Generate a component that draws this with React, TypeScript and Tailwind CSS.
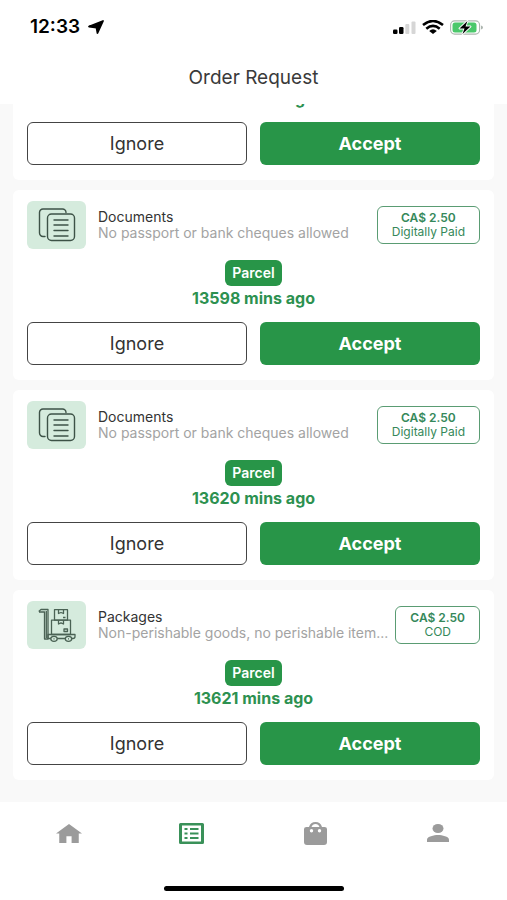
import React from "react";

type Order = {
  id: number;
  kind: "documents" | "packages";
  title: string;
  detail: string;
  price: string;
  payment: string;
  age: string;
};

const orders: Order[] = [
  { id: 2, kind: "documents", title: "Documents", detail: "No passport or bank cheques allowed", price: "CA$ 2.50", payment: "Digitally Paid", age: "13598 mins ago" },
  { id: 3, kind: "documents", title: "Documents", detail: "No passport or bank cheques allowed", price: "CA$ 2.50", payment: "Digitally Paid", age: "13620 mins ago" },
  { id: 4, kind: "packages", title: "Packages", detail: "Non-perishable goods, no perishable item...", price: "CA$ 2.50", payment: "COD", age: "13621 mins ago" },
];

function DocumentsIcon() {
  return (
    <svg viewBox="0 0 38 34" className="h-[34px] w-[38px]" fill="none" stroke="#3d5247" strokeWidth="1.4" strokeLinecap="round" aria-hidden="true">
      <path d="M7 28.500H5a3.500 3.500 0 0 1-3.500-3.500V4.500A3.500 3.500 0 0 1 5 1h19.500A3.500 3.500 0 0 1 28 4.500" />
      <rect x="9.500" y="6" width="27" height="26.500" rx="4" />
      <path d="M16 12h14M16 17h14M16 22.500h14M16 28h14" />
    </svg>
  );
}

function PackagesIcon() {
  return (
    <svg viewBox="0 0 38 34" className="h-[34px] w-[38px]" fill="none" stroke="#4a6254" strokeWidth="1.3" strokeLinejoin="round" aria-hidden="true">
      <path d="M0.700 3.500L3 1.500H10V31H6.500V4H1M8.300 3v27" />
      <path d="M10 26.500H37v2q0 2-2 2H10z" />
      <rect x="16.500" y="1.700" width="13" height="10.500" />
      <path d="M20.500 2v3.500l2.500-1 2.500 1V2M25 9.500H27.500" />
      <rect x="13.500" y="12.200" width="19" height="14.300" />
      <path d="M20.500 12v4l2.500-1.200L25.500 16v-4M26 21h3.500v2.500H26z" />
      <ellipse cx="16" cy="30.800" rx="3.200" ry="2.500" fill="#d5ebdd" />
      <ellipse cx="30.500" cy="30.800" rx="3.200" ry="2.500" fill="#d5ebdd" />
      <path d="M15.500 30.800h1M30 30.800h1" />
    </svg>
  );
}

function OrderActions({ age }: { age: string }) {
  return (
    <>
      <p className="text-center text-[16px] leading-5 font-bold text-[#2d9150]">{age}</p>
      <div className="mt-3.5 grid grid-cols-2 gap-[13px]">
        <button type="button" className="h-[43px] rounded-md border border-[#444] text-[18px] text-[#333]">Ignore</button>
        <button type="button" className="h-[43px] rounded-md bg-[#289548] text-[18px] font-bold text-white">Accept</button>
      </div>
    </>
  );
}

function OrderCard({ order }: { order: Order }) {
  return (
    <article className="shrink-0 rounded-md bg-white px-3.5 pt-[11px] pb-[15px]">
      <div className="flex items-center">
        <div className="flex h-12 w-[59px] shrink-0 items-center justify-center rounded-md bg-[#d5ebdd]">
          {order.kind === "documents" ? <DocumentsIcon /> : <PackagesIcon />}
        </div>
        <div className="ml-3 min-w-0 flex-1 whitespace-nowrap">
          <h2 className="text-[14px] leading-4 text-[#333]">{order.title}</h2>
          <p className="text-[14px] leading-4 text-[#a3a3a3]">{order.detail}</p>
        </div>
        <div className="shrink-0 rounded-md border border-[#5a9c73] px-3.5 py-1 text-center text-[12px] leading-[14px] text-[#35885a]">
          <p className="font-semibold">{order.price}</p>
          <p>{order.payment}</p>
        </div>
      </div>
      <div className="mt-[11px] mb-0.5 flex justify-center">
        <span className="rounded-md bg-[#289548] px-[7px] text-[14px] leading-[26px] font-semibold text-white">Parcel</span>
      </div>
      <OrderActions age={order.age} />
    </article>
  );
}

function StatusBar() {
  return (
    <div className="flex h-[54px] items-center justify-between pr-6 pl-[30px] text-black">
      <div className="flex items-center gap-2">
        <span className="text-[19px] leading-6 font-semibold">12:33</span>
        <svg viewBox="0 0 16 14" className="h-3.5 w-4" aria-hidden="true">
          <path d="M1 6.500L15 1L9.500 13L8.500 7.500z" stroke="black" strokeWidth="1.800" strokeLinejoin="round" />
        </svg>
      </div>
      <div className="flex items-center gap-1.5">
        <svg viewBox="0 0 23 13" className="h-[13px] w-[23px]" aria-hidden="true">
          <rect x="0" y="8.500" width="4.500" height="4.500" rx="1.200" />
          <rect x="6" y="6" width="4.500" height="7" rx="1.200" />
          <rect x="12.300" y="3" width="4" height="10" rx="1" fill="#d6d6d6" />
          <rect x="18.500" y="0.500" width="4" height="12.500" rx="1" fill="#d6d6d6" />
        </svg>
        <svg viewBox="0 0 22 14" className="h-3.5 w-[22px]" fill="none" stroke="black" strokeWidth="2.600" aria-hidden="true">
          <path d="M1 5Q11-3 21 5M4.300 8.700Q11 3.100 17.700 8.700" />
          <path d="M7.200 11Q11 7.400 14.800 11L11 14z" fill="black" stroke="none" />
        </svg>
        <svg viewBox="0 0 33 15" className="h-[15px] w-[33px]" aria-hidden="true">
          <rect x="0.600" y="0.900" width="29" height="13.200" rx="4" fill="white" stroke="#adb8b0" strokeWidth="1.100" />
          <rect x="2.500" y="2.600" width="24" height="9.800" rx="2.500" fill="#4bc86b" />
          <path d="M31 5.500q2 .5 2 2t-2 2z" fill="#adb5af" />
          <path d="M17.500 1L9.500 8.500h5L12.500 14l8-7.500h-5z" stroke="white" strokeWidth="1.800" paintOrder="stroke" strokeLinejoin="round" />
        </svg>
      </div>
    </div>
  );
}

function TabBar() {
  const tab = "flex h-full items-center justify-center";
  return (
    <nav className="grid h-[62px] grid-cols-4 px-[7px] text-[#9b9b9b]">
      <button type="button" aria-label="Home" className={tab}>
        <svg viewBox="2 3 20 17" preserveAspectRatio="none" className="h-[19px] w-[26px]" fill="currentColor">
          <path d="M10 20v-6h4v6h5.500v-8.500H22L12 3 2 11.500h2.500V20z" />
        </svg>
      </button>
      <button type="button" aria-label="Orders" aria-current="page" className={tab + " text-[#3a9159]"}>
        <svg viewBox="0 0 25 21" className="h-[21px] w-[25px]" fill="currentColor">
          <path fillRule="evenodd" d="M1.500 0h22Q25 0 25 1.500v18q0 1.500-1.500 1.500h-22Q0 21 0 19.500v-18Q0 0 1.500 0zM3 2.500v16h19v-16z" />
          <path d="M5.500 5h3v2h-3zM11 5h8.500v2H11zM5.500 9.500h3v2h-3zM11 9.500h8.500v2H11zM5.500 14h3v2h-3zM11 14h8.500v2H11z" />
        </svg>
      </button>
      <button type="button" aria-label="Shop" className={tab}>
        <svg viewBox="0 0 23 23" className="h-[23px] w-[23px]" fill="currentColor">
          <path fillRule="evenodd" d="M5 5Q6.500 0 11.500 0T18 5h2.500Q23 5 23 7v13q0 3-3 3H3q-3 0-3-3V7q0-2 2.500-2zM7.500 5h8q-1-3-4-3t-4 3zM7.500 7A1.700 1.700 0 1 0 7.500 10.400 1.700 1.700 0 1 0 7.500 7M15.500 7a1.700 1.700 0 1 0 0 3.400 1.700 1.700 0 1 0 0-3.400" />
        </svg>
      </button>
      <button type="button" aria-label="Account" className={tab}>
        <svg viewBox="0 0 22 18" className="h-[18px] w-[22px]" fill="currentColor">
          <ellipse cx="11" cy="4.500" rx="5.500" ry="4.500" />
          <path d="M0 18v-2.500C0 12.500 7 11 11 11s11 1.500 11 4.500V18z" />
        </svg>
      </button>
    </nav>
  );
}

export default function App() {
  return (
    <div className="flex h-screen flex-col overflow-hidden bg-[#f9f9f9] font-['Inter','Liberation_Sans',sans-serif]">
      <header className="shrink-0 bg-white">
        <StatusBar />
        <h1 className="h-[50px] pt-3 text-center text-[19px] leading-6 text-[#3a3a3a]">Order Request</h1>
      </header>
      <main className="flex min-h-0 flex-1 flex-col justify-end gap-2.5 overflow-hidden px-[13px] pb-[22px]">
        {/* Row scrolled partly under the header: only its lower half is mounted */}
        <article className="shrink-0 rounded-b-md bg-white px-3.5 pb-[15px]">
          <OrderActions age="13598 mins ago" />
        </article>
        {orders.map((order) => (
          <OrderCard key={order.id} order={order} />
        ))}
      </main>
      <footer className="h-[98px] shrink-0 bg-white">
        <TabBar />
        <div className="mx-auto mt-[22px] h-[5px] w-[180px] rounded-full bg-black" />
      </footer>
    </div>
  );
}
